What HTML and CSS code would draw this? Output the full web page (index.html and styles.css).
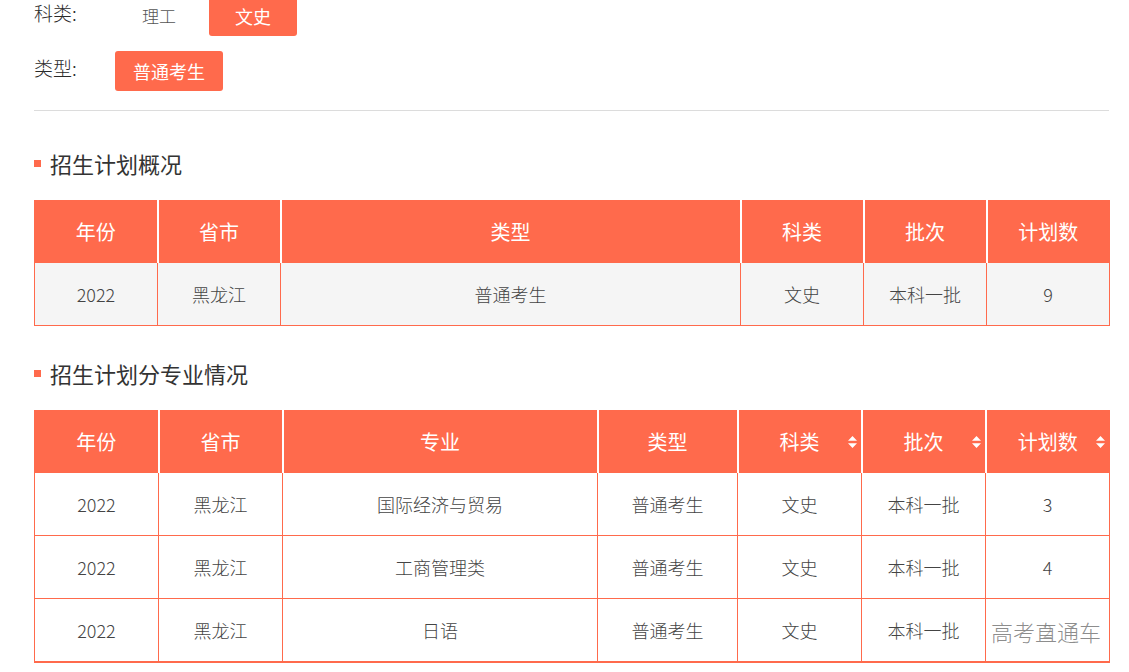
FILE: index.html
```html
<!DOCTYPE html>
<html lang="zh">
<head>
<meta charset="utf-8">
<title>招生计划</title>
<link rel="stylesheet" href="styles.css">
</head>
<body>
<div class="page">
  <div class="filters">
    <div class="filter-row">
      <span class="filter-label">科类:</span>
      <div class="opts">
        <span class="opt">理工</span>
        <span class="opt active">文史</span>
      </div>
    </div>
    <div class="filter-row">
      <span class="filter-label">类型:</span>
      <div class="opts">
        <span class="opt active wide">普通考生</span>
      </div>
    </div>
  </div>
  <div class="divider"></div>

  <h2 class="sec-title"><i class="dot"></i>招生计划概况</h2>
  <table class="tbl t1">
    <colgroup>
      <col style="width:123px"><col style="width:123px"><col style="width:460px"><col style="width:123px"><col style="width:123px"><col style="width:123px">
    </colgroup>
    <thead>
      <tr><th>年份</th><th>省市</th><th>类型</th><th>科类</th><th>批次</th><th>计划数</th></tr>
    </thead>
    <tbody>
      <tr class="gray"><td>2022</td><td>黑龙江</td><td>普通考生</td><td>文史</td><td>本科一批</td><td>9</td></tr>
    </tbody>
  </table>

  <h2 class="sec-title second"><i class="dot"></i>招生计划分专业情况</h2>
  <div class="tbl-wrap">
  <table class="tbl t2">
    <colgroup>
      <col style="width:124px"><col style="width:124px"><col style="width:315px"><col style="width:140px"><col style="width:124px"><col style="width:124px"><col style="width:124px">
    </colgroup>
    <thead>
      <tr>
        <th>年份</th><th>省市</th><th>专业</th><th>类型</th>
        <th class="sort">科类<svg class="sort-ic" viewBox="0 0 9 12" width="9" height="12"><path d="M4.5 0L9 4.7H0Z M4.5 12L9 7.3H0Z" fill="#fff"/></svg></th>
        <th class="sort">批次<svg class="sort-ic" viewBox="0 0 9 12" width="9" height="12"><path d="M4.5 0L9 4.7H0Z M4.5 12L9 7.3H0Z" fill="#fff"/></svg></th>
        <th class="sort">计划数<svg class="sort-ic" viewBox="0 0 9 12" width="9" height="12"><path d="M4.5 0L9 4.7H0Z M4.5 12L9 7.3H0Z" fill="#fff"/></svg></th>
      </tr>
    </thead>
    <tbody>
      <tr><td>2022</td><td>黑龙江</td><td>国际经济与贸易</td><td>普通考生</td><td>文史</td><td>本科一批</td><td>3</td></tr>
      <tr><td>2022</td><td>黑龙江</td><td>工商管理类</td><td>普通考生</td><td>文史</td><td>本科一批</td><td>4</td></tr>
      <tr class="last"><td>2022</td><td>黑龙江</td><td>日语</td><td>普通考生</td><td>文史</td><td>本科一批</td><td>2</td></tr>
    </tbody>
  </table>
  <span class="watermark">高考直通车</span>
  </div>
</div>
</body>
</html>
```
FILE: styles.css
```css
* { box-sizing: border-box; }
html, body { margin: 0; padding: 0; background: #fff; }
body {
  font-family: "Microsoft YaHei", "Noto Sans CJK SC", "Noto Sans", sans-serif;
  color: #333;
  overflow: hidden;
}
.page {
  width: 1076px;
  margin-left: 34px;
  margin-top: -4px;
}
.filters {
  display: flex;
  flex-direction: column;
  gap: 15px;
}
.filter-row {
  display: flex;
  align-items: flex-start;
  height: 40px;
}
.filter-label {
  width: 81px;
  font-size: 19px;
  line-height: 34px;
  color: #2a2a2a;
  font-weight: 300;
}
.opts { display: flex; gap: 6px; }
.opt {
  width: 88px;
  height: 40px;
  line-height: 40px;
  text-align: center;
  font-size: 17px;
  color: #555;
  border-radius: 3px;
  font-weight: 300;
}
.opt.active {
  background: #ff6a4c;
  color: #fff;
  font-size: 18px;
  font-weight: 400;
}
.opt.wide { width: 108px; }
.divider {
  height: 1px;
  background: #dcdcdc;
  margin-top: 19px;
  width: 1075px;
}
.sec-title {
  display: flex;
  align-items: center;
  margin: 36px 0 21px;
  font-size: 22px;
  line-height: 32px;
  font-weight: 400;
  color: #333;
}
.sec-title.second { margin: 31px 0 21px; }
.sec-title .dot {
  width: 7px;
  height: 7px;
  background: #ff6a4c;
  margin-right: 9px;
  margin-top: 1px;
}
.tbl-wrap { position: relative; width: 1076px; }
.tbl {
  border-collapse: collapse;
  table-layout: fixed;
  width: 1076px;
}
.tbl th {
  background: #ff6a4c;
  color: #fff;
  font-size: 20px;
  font-weight: 400;
  height: 62px;
  border-left: 2px solid #fff;
  border-right: 2px solid #fff;
  border-top: 1px solid #ff6a4c;
  text-align: center;
  padding: 0;
}
.tbl th:first-child { border-left: 1px solid #ff6a4c; }
.tbl th:last-child { border-right: 1px solid #ff6a4c; }
.tbl th.sort { position: relative; }
.sort-ic {
  position: absolute;
  right: 4px;
  top: 25px;
}
.tbl td {
  height: 63px;
  border: 1px solid #ff6a4c;
  text-align: center;
  font-size: 18px;
  color: #444;
  font-weight: 300;
  padding: 0;
}
.tbl tr.gray td { background: #f5f5f5; }
.tbl tr.last td { border-bottom: 2px solid #ff6a4c; }
.watermark {
  position: absolute;
  right: 9px;
  bottom: 18px;
  font-size: 22px;
  line-height: 28px;
  color: rgba(120, 120, 120, 0.85);
  background: rgba(255, 255, 255, 0.6);
  font-weight: 300;
}
```
